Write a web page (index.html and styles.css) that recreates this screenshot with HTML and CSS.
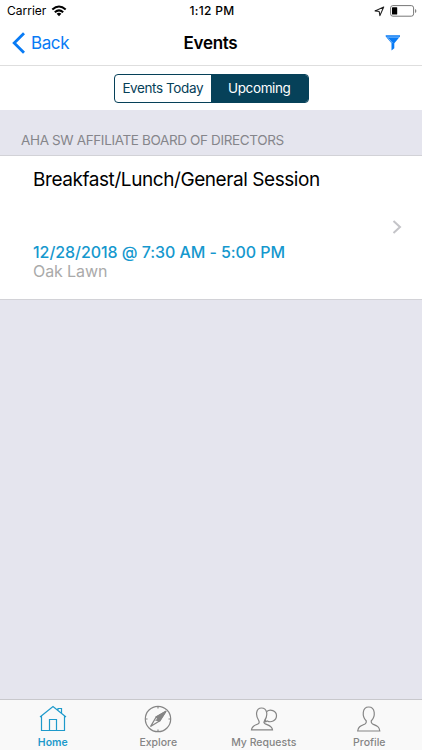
FILE: index.html
```
<!DOCTYPE html>
<html lang="en">
<head>
<meta charset="utf-8">
<meta name="viewport" content="width=device-width, initial-scale=1">
<title>Events</title>
<link rel="stylesheet" href="styles.css">
</head>
<body>
<div class="app">
  <div class="status">
    <div class="status-left"><span class="carrier">Carrier</span>
      <svg class="wifi" width="16" height="12" viewBox="0 0 16 12" fill="none" stroke="#000" stroke-width="2"><path d="M1.3 4.6Q8-1.5 14.7 4.6M3.8 7.2Q8 3.5 12.2 7.2"/><path d="M5.6 8.7Q8 6.8 10.4 8.7L8 11.2Z" fill="#000" stroke="none"/></svg>
    </div>
    <span class="time">1:12 PM</span>
    <div class="status-right">
      <svg width="11" height="11" viewBox="0 0 11 11" fill="none" stroke="#222" stroke-width="1.1" stroke-linejoin="round"><path d="M9.7 1L1 4.9L5.2 5.5L5.9 9.6Z"/></svg>
      <svg width="27" height="12" viewBox="0 0 27 12"><rect x=".6" y=".6" width="23" height="10.6" rx="2.3" fill="#fff" stroke="#777" stroke-width="1"/><rect x="2" y="2.2" width="5.2" height="7.4" rx=".6" fill="#000"/><path d="M25 4v4q1.4-.5 1.4-2T25 4" fill="#888"/></svg>
    </div>
  </div>
  <header class="nav">
    <div class="back"><svg width="14" height="22" viewBox="0 0 14 22" fill="none" stroke="#087bf5" stroke-width="2.8"><path d="M12 1.2L2.2 11L12 20.8"/></svg><span>Back</span></div>
    <h1>Events</h1>
    <svg class="filter" width="16" height="16" viewBox="0 0 16 16"><path d="M.7 .3H15V1.5L9.3 8.2V13.2L6.5 15.5V8.2L.7 1.5Z" fill="#087bf5"/><path d="M1.5 2.1H14.2M3.4 3.4L7.5 8.1" stroke="#fff" stroke-width=".5"/></svg>
  </header>
  <div class="filters"><div class="segments"><div class="segment"><span class="today">Events Today</span></div><div class="segment active"><span class="upcoming">Upcoming</span></div></div></div>
  <main>
    <h2><span>AHA SW AFFILIATE BOARD OF DIRECTORS</span></h2>
    <article class="event">
      <div class="details"><h3><span>Breakfast/Lunch/General Session</span></h3><p class="date"><span>12/28/2018 @ 7:30 AM - 5:00 PM</span></p><p class="place"><span>Oak Lawn</span></p></div>
      <svg width="10" height="14" viewBox="0 0 10 14" fill="none" stroke="#c4c4c8" stroke-width="2"><path d="M1.5 1L8 7L1.5 13"/></svg>
    </article>
  </main>
  <nav class="tabs">
    <div class="tab selected"><svg width="28" height="28" viewBox="0 0 28 28"><path d="M1 12L14 1.5L27 12M2.5 11V25.5H25.5V11M10.5 25.5V14.5H17.5V25.5M19 5V3.5H22.5V8"/></svg><span>Home</span></div>
    <div class="tab"><svg width="28" height="28" viewBox="0 0 28 28"><circle cx="14" cy="14" r="12.7"/><path d="M14 1.3V3.5M14 24.5V26.7M1.3 14H3.5M24.5 14H26.7"/><path d="M22 6.2L15.8 15.8L6.5 21.6L12.2 12Z"/><path d="M22 6.2L12.2 12L14 14L12.4 15.2L15.8 15.8Z" fill="#858585"/></svg><span>Explore</span></div>
    <div class="tab"><svg width="28" height="28" viewBox="0 0 28 28"><path d="M1.5 24.8H22.5C22 20.7 18.2 20.3 15 18.8Q13.3 18 14.6 15.4C18.2 10.5 17.4 3 11.5 3C5.8 3 5.3 10.5 8.7 15.5Q9.8 18 8.3 18.8C5 20.5 2 20.5 1.5 24.8Z"/><path d="M16.8 6.5C20 3.6 26.5 5.5 26.5 10.8C26.5 15.8 20.6 18 17.3 15.9Q16 17 14.8 17Q16.2 15.7 15.4 14.2"/></svg><span class="requests">My Requests</span></div>
    <div class="tab"><svg width="28" height="28" viewBox="0 0 28 28"><path d="M2.7 26H24.8C24.6 21.6 21.4 20.6 17.6 19Q16 18.2 16.2 16C20.8 11.4 20.4 2 13.7 2C7.1 2 6.7 11.4 11.3 16Q11.5 18.2 10 19C6.2 20.7 3 21.6 2.7 26Z"/></svg><span>Profile</span></div>
  </nav>
</div>
</body>
</html>
```
FILE: styles.css
```
* { box-sizing: border-box; }
body { margin: 0; font-family: Inter, "Liberation Sans", sans-serif; color: #000; }
h1, h2, h3, p { margin: 0; font-weight: 400; }
span { white-space: nowrap; }
svg { display: block; flex: none; }
.app { width: 422px; height: 750px; display: flex; flex-direction: column; background: #e5e5ee; }
.status { height: 22px; background: #fff; display: grid; grid-template-columns: 1fr auto 1fr; align-items: center; padding: 0 5px 0 7px; font-size: 12px; line-height: 22px; }
.status-left { display: flex; align-items: center; gap: 5px; }
.time { font-weight: 500; font-size: 12px; letter-spacing: .3px; }
.status-right { display: flex; align-items: center; justify-content: flex-end; gap: 5px; }
.nav { height: 44px; border-bottom: 1px solid #dedede; background: #fff; display: grid; grid-template-columns: 1fr auto 1fr; align-items: center; padding: 0 21px 2px 12px; }
.back { display: flex; align-items: center; gap: 5px; color: #087bf5; font-size: 17px; letter-spacing: -.4px; }
.nav h1 { font-weight: 600; font-size: 17px; letter-spacing: -.3px; padding-left: 8px; }
.filter { justify-self: end; }
.filters { height: 44px; background: #fff; display: flex; justify-content: center; padding-top: 8px; }
.segments { width: 195px; height: 29px; display: flex; border: 1px solid #064159; border-radius: 4px; overflow: hidden; font-size: 13.5px; line-height: 27px; letter-spacing: -.4px; text-align: center; color: #064159; }
.segment { flex: 1; }
.active { background: #064159; color: #fff; }
main { flex: 1; }
h2 { height: 45px; padding: 22px 0 0 21px; font-size: 13.5px; line-height: 17px; letter-spacing: -.36px; color: #85858b; }
.event { height: 145px; padding: 12px 20px 0 33px; background: #fff; border-top: 1px solid #d2d2d7; border-bottom: 1px solid #d2d2d7; display: flex; justify-content: space-between; }
.event > svg { margin-top: 52px; }
h3 { font-size: 19px; line-height: 24px; letter-spacing: -.43px; }
.date { margin-top: 50px; font-size: 16px; line-height: 20px; letter-spacing: -.06px; font-weight: 500; color: #1598ce; }
.place { font-size: 16px; line-height: 19px; letter-spacing: -.1px; color: #aaa; }
.tabs { height: 51px; border-top: 1px solid #c8c8cc; background: #f9f9f9; display: grid; grid-template-columns: repeat(4, 1fr); }
.tab { display: flex; flex-direction: column; align-items: center; padding-top: 5px; color: #858585; font-size: 10.5px; line-height: 13px; font-weight: 500; }
.tab svg { fill: none; stroke: currentColor; stroke-width: 1.2; }
.tab span { margin-top: 3px; }
.selected { color: #1e9acb; font-weight: 600; }
```
